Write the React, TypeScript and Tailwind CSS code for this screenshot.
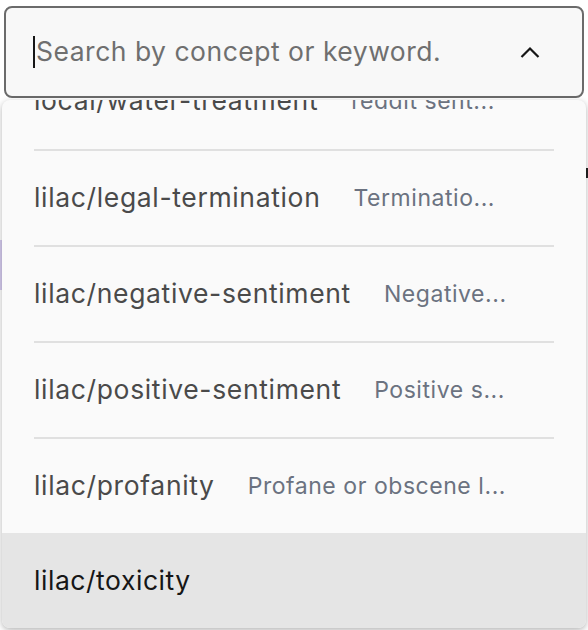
import React from "react";

const items = [
  { name: "local/water-treatment", desc: "reddit sent..." },
  { name: "lilac/legal-termination", desc: "Terminatio..." },
  { name: "lilac/negative-sentiment", desc: "Negative..." },
  { name: "lilac/positive-sentiment", desc: "Positive s..." },
  { name: "lilac/profanity", desc: "Profane or obscene l..." },
  { name: "lilac/toxicity", desc: "" },
];

export default function App() {
  return (
    <div
      className="relative w-[588px] h-[630px] overflow-hidden bg-white"
      style={{ fontFamily: "Inter, 'Noto Sans', sans-serif" }}
    >
      {/* faint background bits */}
      <div className="absolute left-0 top-[240px] w-[3px] h-[50px] bg-[#d6ccf0]" />
      <div className="absolute right-0 top-[168px] w-[2px] h-[10px] bg-[#222]" />

      <div className="relative px-[4px] pt-[6px]">
        <div className="flex items-center h-[92px] rounded-[8px] border-2 border-[#6b6b6b] bg-[#f8f8f8] pl-[27px] pr-[42px]">
          <div className="w-[2px] h-[32px] bg-[#161616] mr-[1px]" />
          <span className="text-[26.5px] text-[#6f6f6f] tracking-[0.5px] flex-1">
            Search by concept or keyword.
          </span>
          <svg width="20" height="12" viewBox="0 0 20 12" fill="none">
            <path d="M1.5 11 L10 2.5 L18.5 11" stroke="#161616" strokeWidth="2.2" />
          </svg>
        </div>
      </div>

      <div className="relative mx-[2px] mt-[2px] w-[584px] h-[528px] overflow-hidden rounded-[8px] bg-[#fafafa] shadow-[0_2px_6px_rgba(0,0,0,0.3)]">
        <div className="-mt-[47px]">
          {items.map((it, i) => {
            const active = i === items.length - 1;
            return (
              <div
                key={it.name}
                className={
                  active
                    ? "h-[96px] flex items-center bg-[#e5e5e5] px-[32px]"
                    : "h-[96px] px-[32px]"
                }
              >
                {active ? (
                  <span className="text-[26.5px] tracking-[0.55px] text-[#161616]">{it.name}</span>
                ) : (
                  <div
                    className={
                      i === 0
                        ? "h-full flex items-center"
                        : "h-full flex items-center border-t-2 border-[#e0e0e0] w-[520px]"
                    }
                  >
                    <span className="text-[26.5px] tracking-[0.65px] text-[#4a4a4a]">{it.name}</span>
                    <span className="ml-[33px] text-[23px] tracking-[0.55px] text-[#6b7280]">{it.desc}</span>
                  </div>
                )}
              </div>
            );
          })}
        </div>
      </div>
    </div>
  );
}
